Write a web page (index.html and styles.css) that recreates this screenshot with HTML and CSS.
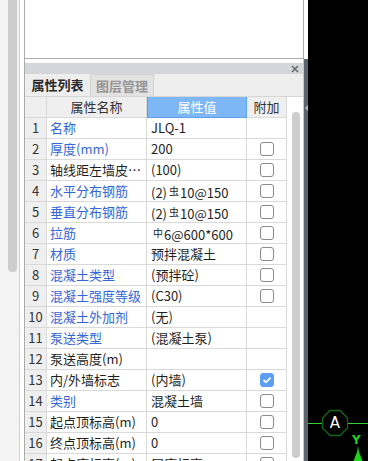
FILE: index.html
```html
<!DOCTYPE html>
<html lang="zh-CN">
<head>
    <meta charset="UTF-8">
    <meta name="viewport" content="width=device-width, initial-scale=1.0">
    <title>属性列表</title>
    <link rel="stylesheet" href="styles.css">
</head>
<body>
<div class="app">
    <div class="gutter"><div class="gutter-thumb"></div></div>

    <div class="work">
        <div class="preview"></div>
        <div class="lower">
            <div class="panel">
                <div class="panel-bar">
                    <svg class="close" width="8" height="8" viewBox="0 0 8 8"><path d="M1 1L7 7M7 1L1 7" stroke="#6a6a6a" stroke-width="1.6"/></svg>
                </div>
                <div class="tabs">
                    <div class="tab tab-active">属性列表</div>
                    <div class="tab tab-off">图层管理</div>
                </div>
                <div class="sheet">
                    <div class="grid">
                        <div class="row head">
                            <div class="c num"></div>
                            <div class="c name">属性名称</div>
                            <div class="c val">属性值</div>
                            <div class="c add">附加</div>
                        </div>
                        <div class="row"><div class="c num">1</div><div class="c name blue">名称</div><div class="c val">JLQ-1</div><div class="c add"></div></div>
                        <div class="row"><div class="c num">2</div><div class="c name blue">厚度(mm)</div><div class="c val">200</div><div class="c add"><span class="box"></span></div></div>
                        <div class="row"><div class="c num">3</div><div class="c name">轴线距左墙皮距离(mm)</div><div class="c val">(100)</div><div class="c add"><span class="box"></span></div></div>
                        <div class="row"><div class="c num">4</div><div class="c name blue">水平分布钢筋</div><div class="c val">(2)<span class="bar">虫</span>10@150</div><div class="c add"><span class="box"></span></div></div>
                        <div class="row"><div class="c num">5</div><div class="c name blue">垂直分布钢筋</div><div class="c val">(2)<span class="bar">虫</span>10@150</div><div class="c add"><span class="box"></span></div></div>
                        <div class="row"><div class="c num">6</div><div class="c name blue">拉筋</div><div class="c val"><span class="bar">中</span>6@600*600</div><div class="c add"><span class="box"></span></div></div>
                        <div class="row"><div class="c num">7</div><div class="c name blue">材质</div><div class="c val">预拌混凝土</div><div class="c add"><span class="box"></span></div></div>
                        <div class="row"><div class="c num">8</div><div class="c name blue">混凝土类型</div><div class="c val">(预拌砼)</div><div class="c add"><span class="box"></span></div></div>
                        <div class="row"><div class="c num">9</div><div class="c name blue">混凝土强度等级</div><div class="c val">(C30)</div><div class="c add"><span class="box"></span></div></div>
                        <div class="row"><div class="c num">10</div><div class="c name blue">混凝土外加剂</div><div class="c val">(无)</div><div class="c add"></div></div>
                        <div class="row"><div class="c num">11</div><div class="c name blue">泵送类型</div><div class="c val">(混凝土泵)</div><div class="c add"></div></div>
                        <div class="row"><div class="c num">12</div><div class="c name">泵送高度(m)</div><div class="c val"></div><div class="c add"></div></div>
                        <div class="row"><div class="c num">13</div><div class="c name">内/外墙标志</div><div class="c val">(内墙)</div><div class="c add"><span class="box checked"><svg width="10" height="8" viewBox="0 0 10 8"><path d="M1.5 4L4 6.3L8.6 1.6" fill="none" stroke="#fff" stroke-width="1.8"/></svg></span></div></div>
                        <div class="row"><div class="c num">14</div><div class="c name blue">类别</div><div class="c val">混凝土墙</div><div class="c add"><span class="box"></span></div></div>
                        <div class="row"><div class="c num">15</div><div class="c name">起点顶标高(m)</div><div class="c val">0</div><div class="c add"><span class="box"></span></div></div>
                        <div class="row"><div class="c num">16</div><div class="c name">终点顶标高(m)</div><div class="c val">0</div><div class="c add"><span class="box"></span></div></div>
                        <div class="row"><div class="c num">17</div><div class="c name">起点底标高(m)</div><div class="c val">层底标高</div><div class="c add"><span class="box"></span></div></div>
                    </div>
                    <div class="vscroll"><div class="vscroll-thumb"></div></div>
                </div>
            </div>
            <div class="edge"><span class="edge-arrow"></span></div>
        </div>
    </div>

    <div class="canvas">
        <div class="axis-line"></div>
        <div class="bubble">
            <svg width="28" height="28" viewBox="0 0 28 28"><polygon points="9,1.5 19,1.5 26.5,9 26.5,19 19,26.5 9,26.5 1.5,19 1.5,9" fill="#000" stroke="#12661a" stroke-width="1.3"/></svg>
            <span class="bubble-label">A</span>
        </div>
        <span class="y-label">Y</span>
        <svg class="y-arrow" width="10" height="15" viewBox="0 0 10 15"><polygon points="5,0 6,6 9.5,15 0.5,15 4,6" fill="#1ed21e"/></svg>
    </div>
</div>
</body>
</html>
```

FILE: styles.css
```css
body { margin: 0; background: #000; font-family: "Noto Sans CJK SC", "Noto Sans", sans-serif; font-size: 13px; color: #222; }
.app { display: flex; width: 368px; height: 461px; overflow: hidden; }

.gutter { width: 20px; padding-left: 8px; box-sizing: border-box; background: #f3f3f3; border-right: 1px solid #cfd0d6; }
.gutter-thumb { width: 9px; height: 272px; background: #cdcdcd; border-radius: 0 0 4px 4px; }

.work { width: 288px; padding-left: 4px; box-sizing: border-box; background: #fff; display: flex; flex-direction: column; overflow: hidden; }
.preview { flex-shrink: 0; width: 280px; height: 59px; box-sizing: border-box; border: 1px solid #ababab; border-top: none; }
.lower { flex: 1; display: flex; min-height: 0; }

.panel { width: 279px; padding-top: 4px; border-left: 1px solid #ababab; box-sizing: border-box; display: flex; flex-direction: column; overflow: hidden; }
.panel-bar { flex-shrink: 0; height: 11px; background: #d4d6db; display: flex; align-items: center; justify-content: flex-end; padding-right: 4px; }
.tabs { flex-shrink: 0; height: 22px; background: #eeeeee; border-bottom: 1px solid #d6d6d6; display: flex; }
.tab { width: 65px; line-height: 22px; text-align: center; font-weight: bold; }
.tab-active { color: #2a2a2a; }
.tab-off { width: 64px; box-sizing: border-box; background: #e2e2e2; color: #959595; border: 1px solid #d2d2d2; border-bottom: none; line-height: 21px; }

.sheet { flex-shrink: 0; display: flex; }
.grid { width: 262px; }
.row { display: grid; grid-template-columns: 22px 100px 100px 40px; height: 21px; }
.c { border-right: 1px solid #d9d9d9; border-bottom: 1px solid #d9d9d9; line-height: 20px; white-space: nowrap; overflow: hidden; text-overflow: ellipsis; }
.num { background: #efefef; text-align: center; color: #333; font-size: 13px; }
.name { padding-left: 3px; color: #1f1f1f; }
.blue { color: #3366d6; }
.val { padding-left: 4px; color: #1f1f1f; }
.add { display: flex; align-items: center; justify-content: center; }
.bar { font-size: 10px; vertical-align: 3px; margin: 0 1px 0 2px; }

.head .c { background: #efefef; text-align: center; color: #333; padding: 0; }
.head .val { background: #7db7f5; color: #fff; border: 1px solid #5d9fea; border-top: none; line-height: 20px; }

.box { width: 12px; height: 12px; border: 1px solid #8a8a8a; border-radius: 3px; background: #fff; display: flex; align-items: center; justify-content: center; }
.box.checked { background: #5b9ef3; border-color: #5b9ef3; }

.vscroll { width: 16px; padding: 15px 0 0 5px; box-sizing: border-box; background: #fff; }
.vscroll-thumb { width: 8px; height: 346px; background: #cdcdcd; border-radius: 4px; }

.edge { width: 5px; box-sizing: border-box; border-left: 1px solid #c9c9c9; background: #5b6570; padding-top: 46px; }
.edge-arrow { display: block; width: 0; height: 0; margin-left: 1px; border-right: 3px solid #b4b9be; border-top: 3px solid transparent; border-bottom: 3px solid transparent; }

.canvas { flex: 1; position: relative; background: #000; }
.axis-line { position: absolute; left: 0; right: 0; top: 423px; height: 1px; background: #35cf35; }
.bubble { position: absolute; left: 13px; top: 409px; width: 28px; height: 28px; }
.bubble svg { display: block; }
.bubble-label { position: absolute; left: 0; right: 0; top: 4px; text-align: center; color: #fff; font-family: "DejaVu Sans", sans-serif; font-size: 15px; line-height: 20px; }
.y-label { position: absolute; left: 44px; top: 433px; color: #1ed21e; font-family: "DejaVu Sans", sans-serif; font-size: 12px; font-weight: bold; line-height: 14px; }
.y-arrow { position: absolute; left: 45px; top: 446px; }
```
